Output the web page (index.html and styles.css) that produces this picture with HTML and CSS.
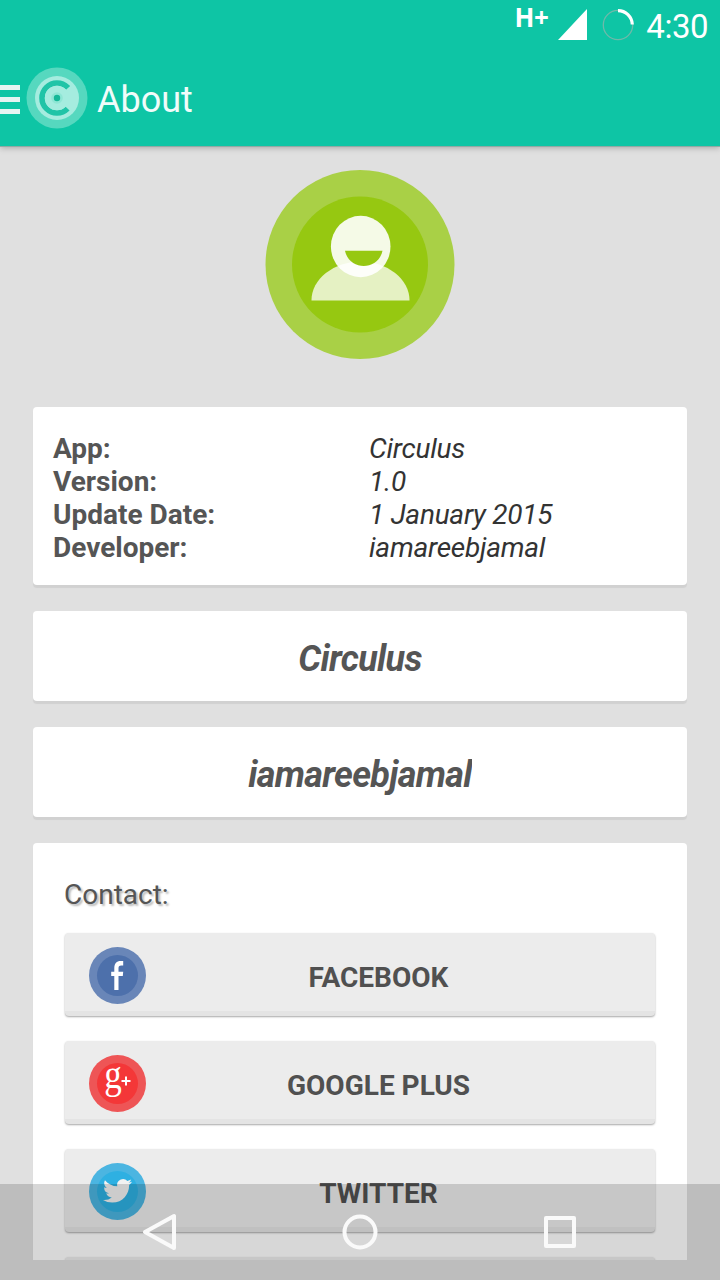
FILE: index.html
```html
<!DOCTYPE html>
<html lang="en">
<head>
    <meta charset="UTF-8">
    <meta name="viewport" content="width=device-width, initial-scale=1.0">
    <title>About</title>
    <link rel="stylesheet" href="styles.css">
</head>
<body>

    <header class="header">
        <div class="status-bar">
            <span class="network">H+</span>
            <svg class="signal" width="29" height="31" viewBox="0 0 29 31"><path d="M29 0V31H0Z" fill="#fff"/></svg>
            <svg class="battery" width="32" height="32" viewBox="0 0 32 32" fill="none">
                <circle cx="16" cy="16" r="14.7" stroke="#6fb9a9" stroke-width="1.3"/>
                <path d="M16 1.7A14.3 14.3 0 0 1 30.3 15.5" stroke="#fff" stroke-width="3.2"/>
            </svg>
            <span class="clock">4:30</span>
        </div>
        <div class="action-bar">
            <div class="menu-icon"><i></i><i></i><i></i></div>
            <svg class="logo" width="62" height="62" viewBox="0 0 62 62" fill="none">
                <circle cx="31" cy="31" r="30.5" fill="#56d8bf"/>
                <circle cx="31" cy="31" r="22" fill="#a5ecdf"/>
                <circle cx="31" cy="31" r="15" stroke="#20c4a7" stroke-width="5.6" stroke-dasharray="71 24" transform="rotate(45 31 31)"/>
                <circle cx="31" cy="31" r="12.2" fill="#a5ecdf"/>
                <circle cx="31" cy="31" r="5.8" fill="#8fe6d5"/>
                <circle cx="31" cy="31" r="3.2" fill="#14b898"/>
            </svg>
            <h1>About</h1>
        </div>
    </header>

    <main class="content">
        <svg class="avatar" width="190" height="190" viewBox="0 0 190 190">
            <circle cx="95" cy="95.5" r="94.5" fill="#a9d046"/>
            <circle cx="95" cy="95.5" r="68" fill="#96c811"/>
            <path d="M46.500 131.500A49 39 0 0 1 144.500 131.500Z" fill="#fff" fill-opacity=".75"/>
            <ellipse cx="95.700" cy="77.500" rx="29.800" ry="30.700" fill="#fff" fill-opacity=".9"/>
            <path d="M80 81.700H117.500C115.500 91.700 107 97 98.700 97S82 91.700 80 81.700Z" fill="#96c811"/>
        </svg>

        <div class="card info">
            <div class="labels">
                <p>App:</p>
                <p>Version:</p>
                <p>Update Date:</p>
                <p>Developer:</p>
            </div>
            <div class="values">
                <p>Circulus</p>
                <p>1.0</p>
                <p>1 January 2015</p>
                <p>iamareebjamal</p>
            </div>
        </div>

        <div class="card name"><span>Circulus</span></div>
        <div class="card name"><span>iamareebjamal</span></div>

        <div class="card contact">
            <h2>Contact:</h2>
            <button class="contact-button">
                <svg width="58" height="58" viewBox="0.5 0.5 58 58">
                    <circle cx="29" cy="29" r="28.500" fill="#6986b8"/>
                    <circle cx="29" cy="29" r="20.500" fill="#4d70ab"/>
                    <path d="M25.800 43.500V29.500H22.700V25.300H25.800V21.500C25.800 17 28.300 14.500 32 14.500H34.700V18.900H32.700C30.700 18.900 30 19.800 30 21.800V25.300H34.700L34.300 29.500H30V43.500Z" fill="#fff"/>
                </svg>
                <span>FACEBOOK</span>
            </button>
            <button class="contact-button">
                <svg width="58" height="58" viewBox="0.5 0.5 58 58">
                    <circle cx="29" cy="29" r="28.500" fill="#ee5556"/>
                    <circle cx="29" cy="29" r="20.500" fill="#f43738"/>
                    <text class="g-letter" x="15.800" y="33.500" textLength="17.500" lengthAdjust="spacingAndGlyphs">g</text>
                    <path d="M37.500 22V31M33 26.500H42" stroke="#fff" stroke-width="2"/>
                </svg>
                <span>GOOGLE PLUS</span>
            </button>
            <button class="contact-button">
                <svg width="58" height="58" viewBox="0.5 0.5 58 58">
                    <circle cx="29" cy="29" r="28.500" fill="#4bb5e1"/>
                    <circle cx="29" cy="29" r="20.500" fill="#2eb0e2"/>
                    <path transform="translate(14.500 13.800) scale(1.210)" fill="#f2f2f2" d="M23.953 4.570a10 10 0 0 1-2.825.775 4.958 4.958 0 0 0 2.163-2.723c-.951.555-2.005.959-3.127 1.184a4.920 4.920 0 0 0-8.384 4.482C7.690 8.095 4.067 6.130 1.640 3.162a4.822 4.822 0 0 0-.666 2.475c0 1.710.870 3.213 2.188 4.096a4.904 4.904 0 0 1-2.228-.616v.060a4.923 4.923 0 0 0 3.946 4.827 4.996 4.996 0 0 1-2.212.085 4.936 4.936 0 0 0 4.604 3.417 9.867 9.867 0 0 1-6.102 2.105c-.390 0-.779-.023-1.170-.067a13.995 13.995 0 0 0 7.557 2.209c9.053 0 13.998-7.496 13.998-13.985 0-.210 0-.420-.015-.630A9.935 9.935 0 0 0 24 4.590z"/>
                </svg>
                <span>TWITTER</span>
            </button>
            <button class="contact-button"></button>
        </div>
    </main>

    <nav class="nav-bar">
        <svg width="40" height="40" viewBox="0 0 40 40"><path d="M5 20L34 4V36Z"/></svg>
        <svg width="40" height="40" viewBox="0 0 40 40"><circle cx="20" cy="20" r="15.500"/></svg>
        <svg width="40" height="40" viewBox="0 0 40 40"><rect x="6" y="6" width="28" height="28"/></svg>
    </nav>

</body>
</html>
```
FILE: styles.css
```css
* {
    box-sizing: border-box;
}

body {
    margin: 0;
    height: 1280px;
    overflow: hidden;
    background: #e0e0e0;
    font-family: Roboto, sans-serif;
    color: #555;
}

h1, h2, p {
    margin: 0;
    font-weight: normal;
}

svg {
    display: block;
    flex-shrink: 0;
}

.header {
    height: 147px;
    background: #0ec5a5;
    border-bottom: 1px solid #91aaa5;
    box-shadow: 0 1px 6px rgba(0, 0, 0, 0.25);
    color: #fff;
}

.status-bar {
    display: flex;
    justify-content: flex-end;
    height: 50px;
    padding: 9px 12px 0 0;
}

.network {
    margin-right: 10px;
    font: bold 26px/16px "Open Sans", sans-serif;
    letter-spacing: -0.5px;
}

.battery {
    margin: 0 12px 0 15px;
}

.clock {
    font-size: 33px;
    line-height: 35px;
    letter-spacing: -0.5px;
}

.action-bar {
    display: flex;
    align-items: center;
    height: 96px;
}

.menu-icon {
    display: flex;
    flex-direction: column;
    gap: 7px;
    width: 20px;
    margin: 3px 6px 0 0;
}

.menu-icon i {
    height: 5px;
    background: #e6f4f2;
}

.action-bar h1 {
    margin: 4px 0 0 9px;
    font-size: 36px;
    line-height: 42px;
    color: #f0fcfa;
}

.content {
    height: 1113px;
    padding: 22px 33px 0;
    overflow: hidden;
}

.avatar {
    margin: 0 auto 48px;
    overflow: visible;
}

.card {
    margin-bottom: 26px;
    background: #fff;
    border-radius: 4px;
    box-shadow: 0 3px 1px #d1d1d1;
}

.info {
    display: flex;
    height: 178px;
    padding: 25px 20px 0;
    font-size: 28px;
    line-height: 33px;
}

.labels {
    width: 316px;
}

.labels p {
    font-weight: bold;
}

.values {
    font-style: italic;
    letter-spacing: -0.25px;
    color: #333;
}

.name {
    height: 90px;
    padding-top: 26px;
    text-align: center;
    font-size: 36px;
    font-weight: bold;
    font-style: italic;
    line-height: 44px;
    letter-spacing: -0.7px;
}

.name span {
    display: inline-block;
    overflow: hidden;
}

.contact {
    height: 600px;
    padding: 35px 32px 0;
}

.contact h2 {
    margin: 0 0 21px -1px;
    font-size: 28px;
    line-height: 34px;
    text-shadow: 2px 2px 2px #bbb;
}

.contact-button {
    display: flex;
    align-items: center;
    width: 100%;
    height: 83px;
    margin-bottom: 25px;
    padding: 0 66px 0 24px;
    border: 0;
    border-bottom: 5px solid #e4e4e4;
    border-radius: 4px;
    background: #ececec;
    box-shadow: 0 1px 2px rgba(0, 0, 0, 0.35);
    font: bold 28px/34px Roboto, sans-serif;
    color: #505050;
}

.contact-button svg {
    margin-top: 7px;
}

.contact-button span {
    flex: 1;
    margin: 12px 0 0 21px;
    text-align: center;
}

.g-letter {
    font: 39px "Liberation Serif", serif;
    fill: #fff;
}

/* translucent system bar over the bottom of the page */
.nav-bar {
    position: fixed;
    left: 0;
    right: 0;
    bottom: 0;
    display: flex;
    justify-content: center;
    gap: 160px;
    height: 96px;
    padding-top: 28px;
    background: rgba(0, 0, 0, 0.157);
}

.nav-bar svg {
    fill: none;
    stroke: #fafafa;
    stroke-width: 4;
    stroke-linejoin: round;
}
```
